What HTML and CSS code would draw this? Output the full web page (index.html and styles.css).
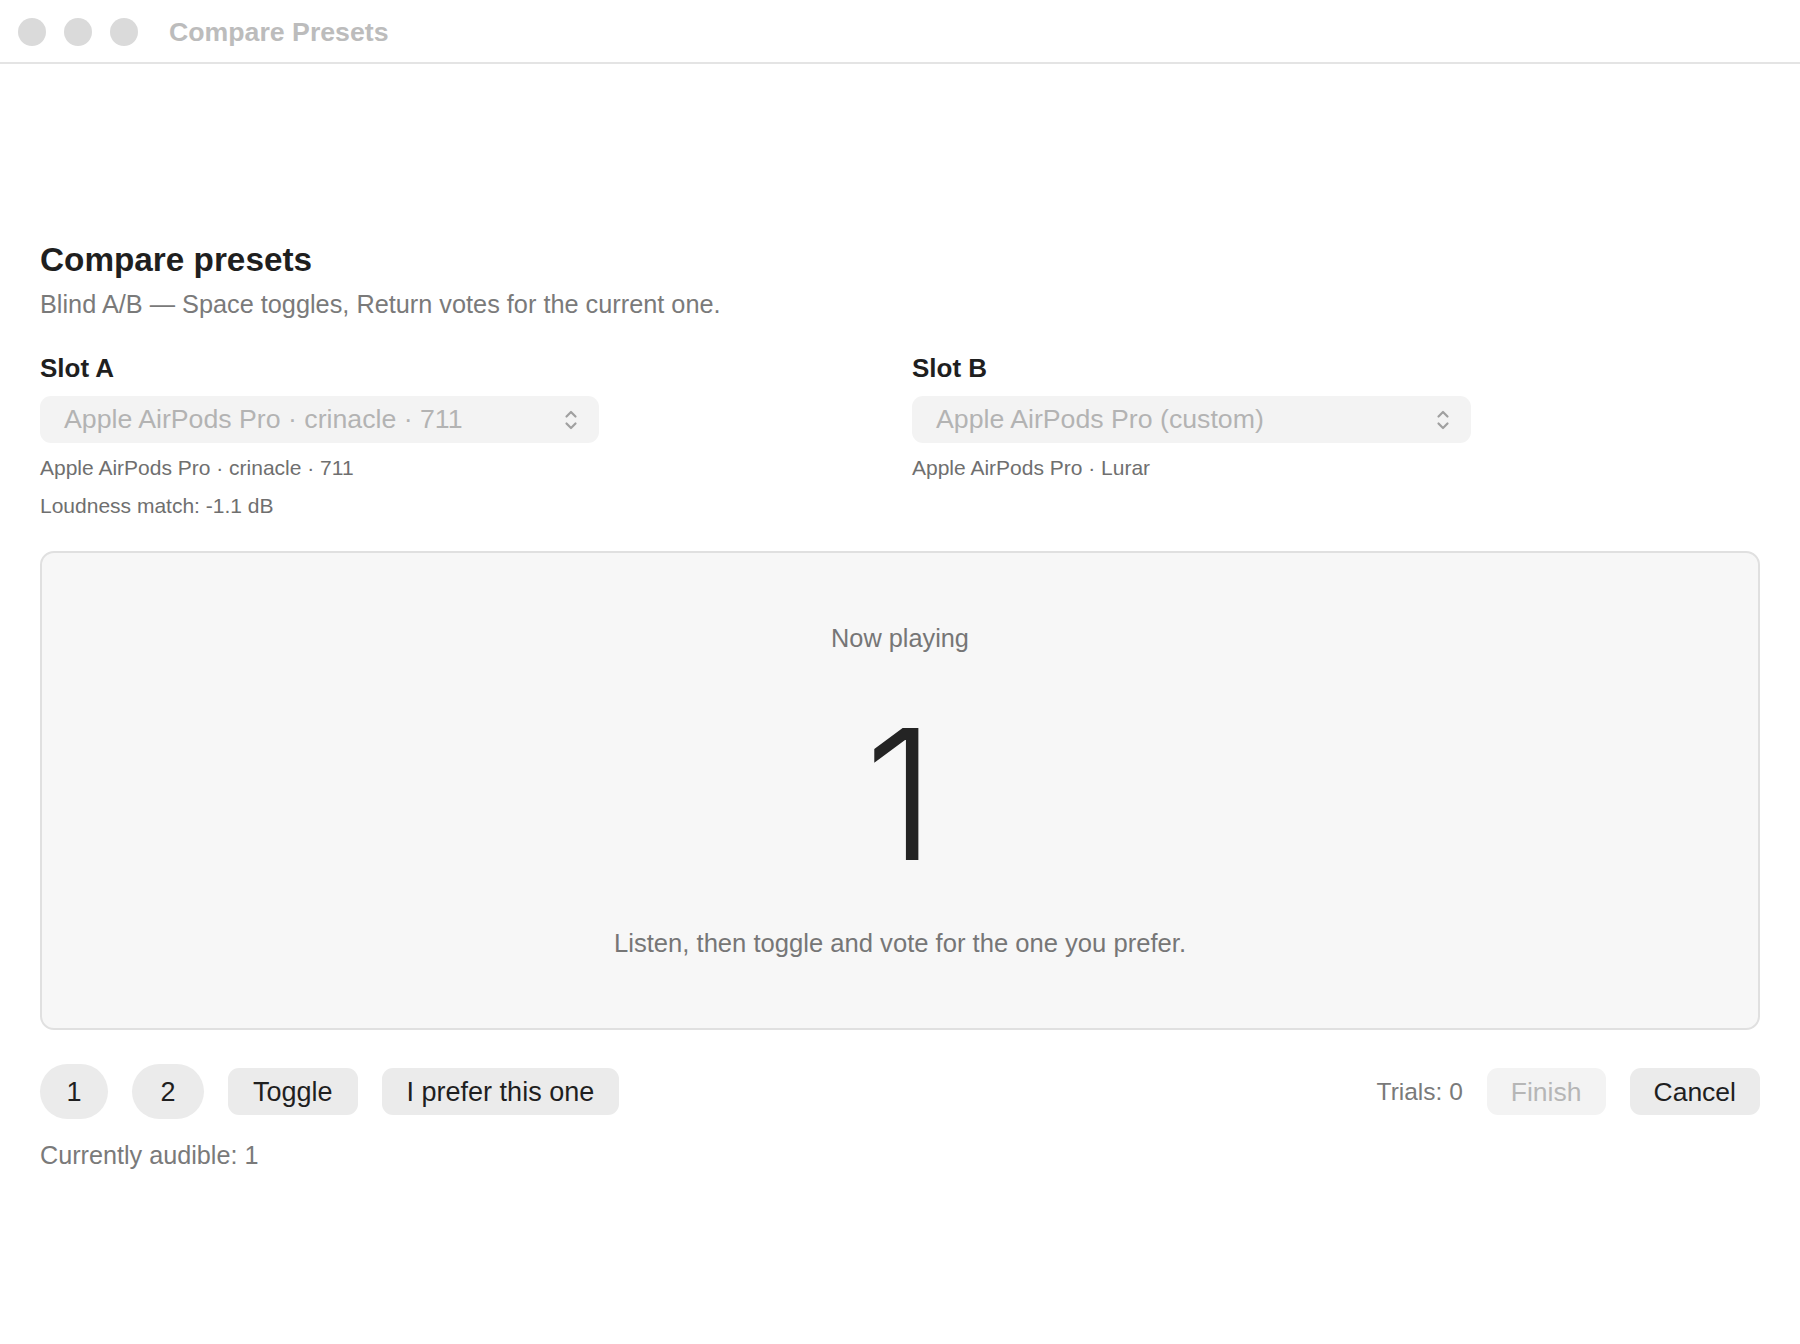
FILE: index.html
```html
<!DOCTYPE html>
<html lang="en">
<head>
<meta charset="utf-8">
<title>Compare Presets</title>
<link rel="stylesheet" href="styles.css">
</head>
<body>
<div class="window">
  <header class="titlebar">
    <div class="lights">
      <span class="light"></span>
      <span class="light"></span>
      <span class="light"></span>
    </div>
    <div class="window-title">Compare Presets</div>
  </header>

  <main class="content">
    <h1 class="heading">Compare presets</h1>
    <p class="subtitle">Blind A/B — Space toggles, Return votes for the current one.</p>

    <div class="slots">
      <section class="slot">
        <div class="slot-label">Slot A</div>
        <div class="popup">
          <span class="popup-text">Apple AirPods Pro · crinacle · 711</span>
          <svg class="chevrons" width="14" height="26" viewBox="0 0 14 26"><path d="M2.5 9.5 L7 5 L11.5 9.5 M2.5 16.5 L7 21 L11.5 16.5" fill="none" stroke="#a0a0a0" stroke-width="2.2" stroke-linecap="round" stroke-linejoin="round"/></svg>
        </div>
        <div class="desc">Apple AirPods Pro · crinacle · 711</div>
        <div class="desc second">Loudness match: -1.1 dB</div>
      </section>
      <section class="slot">
        <div class="slot-label">Slot B</div>
        <div class="popup">
          <span class="popup-text">Apple AirPods Pro (custom)</span>
          <svg class="chevrons" width="14" height="26" viewBox="0 0 14 26"><path d="M2.5 9.5 L7 5 L11.5 9.5 M2.5 16.5 L7 21 L11.5 16.5" fill="none" stroke="#a0a0a0" stroke-width="2.2" stroke-linecap="round" stroke-linejoin="round"/></svg>
        </div>
        <div class="desc">Apple AirPods Pro · Lurar</div>
      </section>
    </div>

    <div class="card">
      <div class="now-playing">Now playing</div>
      <div class="digit">1</div>
      <div class="hint">Listen, then toggle and vote for the one you prefer.</div>
    </div>

    <div class="controls">
      <div class="group">
        <button class="btn round">1</button>
        <button class="btn round wide">2</button>
        <button class="btn">Toggle</button>
        <button class="btn">I prefer this one</button>
      </div>
      <div class="group">
        <span class="trials">Trials: 0</span>
        <button class="btn compact disabled">Finish</button>
        <button class="btn compact">Cancel</button>
      </div>
    </div>

    <div class="audible">Currently audible: 1</div>
  </main>
</div>
</body>
</html>
```

FILE: styles.css
```css
* { box-sizing: border-box; }

html, body {
  margin: 0;
  padding: 0;
  background: #ffffff;
}

body {
  font-family: "Liberation Sans", Arial, sans-serif;
  color: #1f1f1f;
  width: 1800px;
  height: 1344px;
  overflow: hidden;
}

.titlebar {
  height: 64px;
  border-bottom: 2px solid #e4e4e4;
  display: flex;
  align-items: center;
  padding: 2px 0 0 18px;
}

.lights {
  display: flex;
  gap: 18px;
}

.light {
  width: 28px;
  height: 28px;
  border-radius: 50%;
  background: #dadada;
}

.window-title {
  margin-left: 31px;
  font-size: 26.7px;
  font-weight: 700;
  color: #bcbcbc;
}

.content {
  padding: 0 40px;
}

.heading {
  margin: 176px 0 0;
  font-size: 33.3px;
  line-height: 40px;
  font-weight: 700;
  color: #1f1f1f;
}

.subtitle {
  margin: 8px 0 0;
  font-size: 25.3px;
  line-height: 32px;
  color: #7a7a7a;
}

.slots {
  margin-top: 32px;
  display: grid;
  grid-template-columns: 1fr 1fr;
  gap: 24px;
}

.slot-label {
  font-size: 26px;
  line-height: 32px;
  font-weight: 700;
  color: #1f1f1f;
}

.popup {
  margin-top: 12px;
  width: 559px;
  height: 47px;
  border-radius: 11px;
  background: #f3f3f3;
  display: flex;
  align-items: center;
  justify-content: space-between;
  padding: 0 21px 0 24px;
}

.popup-text {
  font-size: 26.7px;
  color: #b3b3b3;
}

.chevrons {
  display: block;
}

.desc {
  margin-top: 11px;
  font-size: 21px;
  line-height: 28px;
  color: #6f6f6f;
}

.desc.second {
  margin-top: 10px;
}

.card {
  margin-top: 31px;
  height: 479px;
  border: 2px solid #e0e0e0;
  border-radius: 14px;
  background: #f7f7f7;
  display: flex;
  flex-direction: column;
  align-items: center;
  padding-top: 69px;
}

.now-playing {
  font-size: 25.3px;
  line-height: 32px;
  color: #767676;
}

.digit {
  margin-top: 44px;
  font-family: "Inter", "Liberation Sans", sans-serif;
  font-size: 182px;
  line-height: 192px;
  font-weight: 300;
  color: #242424;
}

.hint {
  margin-top: 37px;
  font-size: 25.6px;
  line-height: 32px;
  color: #767676;
}

.controls {
  margin-top: 34px;
  display: flex;
  align-items: center;
  justify-content: space-between;
}

.group {
  display: flex;
  align-items: center;
  gap: 24px;
}

.btn {
  font-family: "Liberation Sans", Arial, sans-serif;
  font-size: 27px;
  line-height: 32px;
  height: 47px;
  padding: 0 25px;
  border: none;
  border-radius: 11px;
  background: #ebebeb;
  color: #1f1f1f;
}

.btn.compact {
  padding: 0 24px;
  font-size: 26.5px;
}

.btn.round {
  height: 55px;
  width: 68px;
  padding: 0;
  border-radius: 28px;
}

.btn.round.wide {
  width: 72px;
}

.btn.disabled {
  background: #f3f3f3;
  color: #b6b6b6;
}

.trials {
  font-size: 24.5px;
  color: #7a7a7a;
}

.audible {
  margin-top: 20px;
  font-size: 25.2px;
  line-height: 32px;
  color: #7a7a7a;
}
```
